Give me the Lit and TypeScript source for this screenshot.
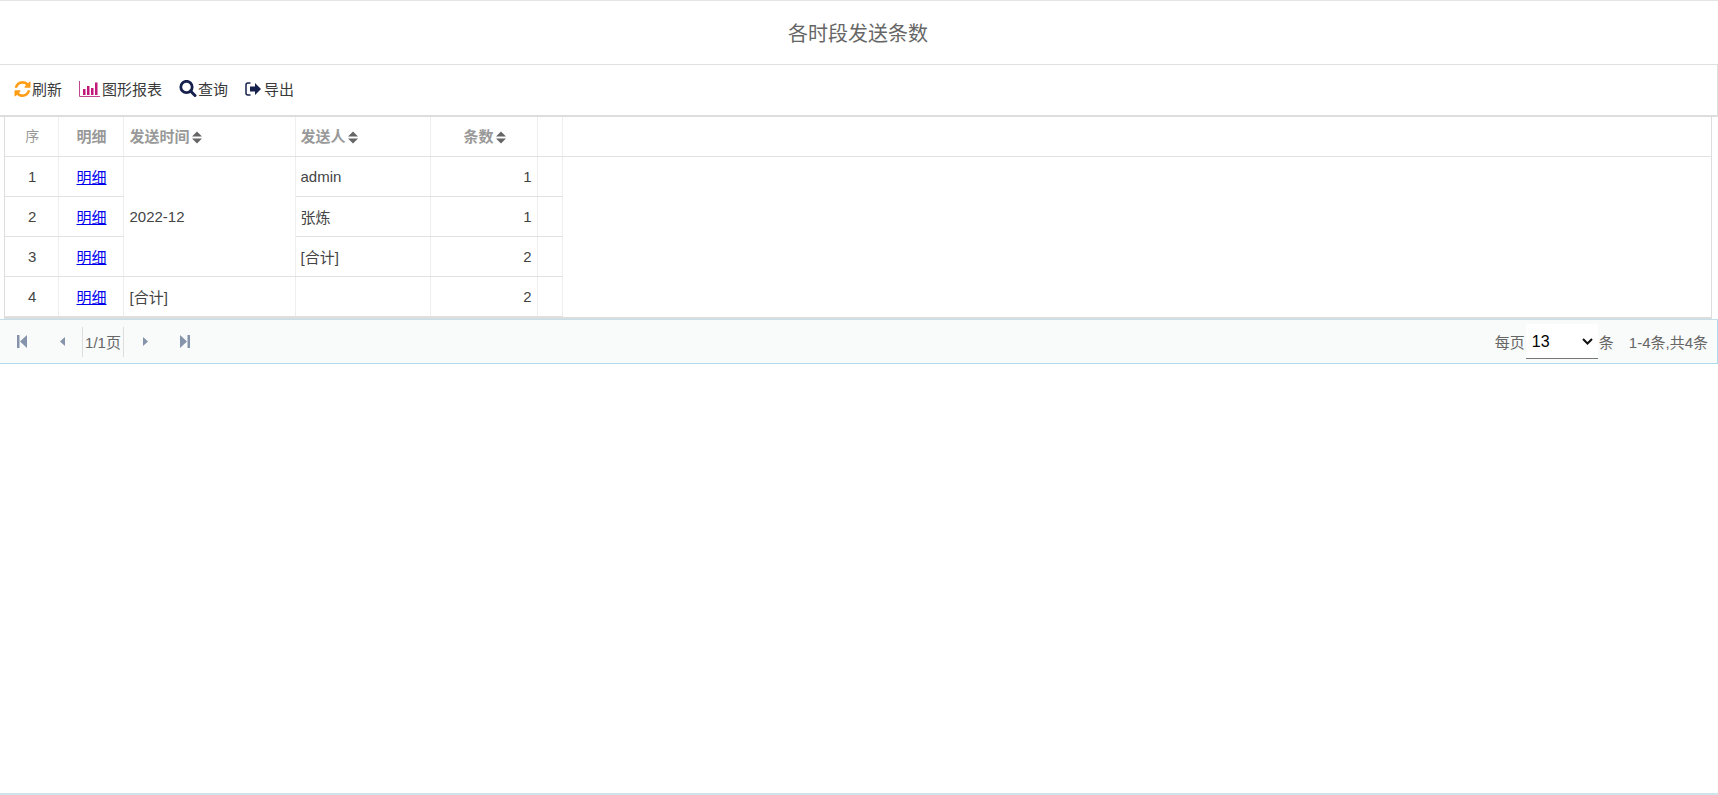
import { LitElement, html, css } from "lit";
import { customElement } from "lit/decorators.js";

const sort = html`<svg class="sort" viewBox="0 0 10 13" width="10" height="13"><path d="M5 0.500L10 5.500H0zM0 7.500h10L5 12.500z" fill="#666"/></svg>`;

@customElement("app-root")
export class AppRoot extends LitElement {
  static styles = css`
    :host { display: flex; flex-direction: column; height: 795px; font-family: "Liberation Sans", "Noto Sans CJK SC", sans-serif; font-size: 15px; color: #444; background: #fff; box-sizing: border-box; border-bottom: 2px solid #cfe3ea; }
    * { box-sizing: border-box; }
    .title { height: 65px; padding-right: 2px; border-top: 1px solid #e5e5e5; border-bottom: 1px solid #e0e0e0; display: flex; align-items: center; justify-content: center; font-size: 20px; color: #666; }
    .toolbar { height: 52px; display: flex; align-items: center; padding: 0 0 3px 14px; gap: 17px; border-right: 1px solid #e0e0e0; border-bottom: 2px solid #ddd; font-size: 15px; color: #3a3a3a; }
    .tool { display: flex; align-items: center; gap: 1px; }
    .tool svg { display: block; }
    .grid { height: 202px; margin-left: 4px; margin-right: 6px; border-left: 1px solid #ddd; border-right: 1px solid #ddd; border-bottom: 2px solid #ddd; position: relative; }
    table { border-collapse: collapse; table-layout: fixed; width: 557px; font-size: 15px; }
    td, th { height: 40px; padding: 0 5px; border-bottom: 1px solid #e2e2e2; border-right: 1px solid #eee; font-weight: normal; white-space: nowrap; overflow: hidden; }
    tr.h th { height: 39px; padding-bottom: 2px; color: #999; font-weight: bold; font-size: 15px; }
    tr.h th.seq { font-weight: normal; font-size: 14px; }
    .c { text-align: center; padding-left: 7px; }
    .l { text-align: left; }
    .time { padding-left: 6px; }
    .r { text-align: right; }
    a { color: #00e; text-decoration: underline; }
    .rule { position: absolute; left: 557px; right: 0; top: 39px; height: 1px; background: #e2e2e2; }
    .sort { vertical-align: -2px; margin-left: 2px; }
    .pager { height: 45px; border-top: 1px solid #c4dfe9; border-right: 1px solid #acdcee; border-bottom: 1px solid #acdcee; background: #f9fafa; display: flex; align-items: center; color: #666; font-size: 15px; padding-left: 2px; }
    .pbtn { width: 40px; display: flex; justify-content: center; }
    .pnum { width: 42px; margin-right: 1px; height: 30px; display: flex; align-items: center; justify-content: center; border-left: 1px solid #ddd; border-right: 1px solid #ddd; white-space: nowrap; }
    .right { margin-left: auto; display: flex; align-items: center; padding-right: 9px; }
    .sel { position: relative; display: flex; margin: 0 1px 0 1px; }
    select { appearance: none; width: 72px; height: 35px; border: 0; border-bottom: 1px solid #777; border-radius: 0; background: #fff; font-family: inherit; font-size: 16px; color: #000; padding: 0 0 0 6px; margin: 0; outline: none; }
    .chev { position: absolute; right: 5px; top: 14px; pointer-events: none; }
    .total { margin-left: 15px; }
  `;

  private rows = [
    { n: 1, who: "admin", c: 1 },
    { n: 2, who: "张炼", c: 1 },
    { n: 3, who: "[合计]", c: 2 },
  ];

  render() {
    return html`
      <div class="title">各时段发送条数</div>
      <div class="toolbar">
        <div class="tool">
          <svg width="17" height="16" viewBox="0 0 1536 1536"><path fill="#ff9e16" d="M1511 928q0 5-1 7-64 268-268 434.500T764 1536q-146 0-282.500-55T238 1324l-129 129q-19 19-45 19t-45-19-19-45V960q0-26 19-45t45-19h448q26 0 45 19t19 45-19 45l-137 137q71 66 161 102t187 36q134 0 250-65t186-179q11-17 53-117 8-23 30-23h192q13 0 22.500 9.500t9.500 22.500zm25-800v448q0 26-19 45t-45 19h-448q-26 0-45-19t-19-45 19-45l138-138Q969 256 768 256q-134 0-250 65T332 500q-11 17-53 117-8 23-30 23H50q-13 0-22.500-9.500T18 608v-7q65-268 270-434.500T768 0q146 0 284 55.500T1297 212l130-129q19-19 45-19t45 19 19 45z"/></svg>
          <span>刷新</span>
        </div>
        <div class="tool">
          <svg width="22" height="16" viewBox="0 0 22 16"><path d="M0.500 0v15.500H21" fill="none" stroke="#c0478f" stroke-width="1"/><path fill="#c2187a" d="M4 8h2.500v6H4zM8 5h2.500v9H8zM12 7h2.500v7H12zM16 1.500h2.500V14H16z"/></svg>
          <span>图形报表</span>
        </div>
        <div class="tool">
          <svg width="18" height="17" viewBox="0 0 18 17"><circle cx="7.500" cy="7" r="5.700" fill="none" stroke="#16204d" stroke-width="2.800"/><path d="M11.500 11l4.500 4.500" stroke="#16204d" stroke-width="3" stroke-linecap="round"/></svg>
          <span>查询</span>
        </div>
        <div class="tool">
          <svg width="18" height="14" viewBox="0 0 18 14"><path d="M5.500 1H3a2 2 0 0 0-2 2v8a2 2 0 0 0 2 2h2.500" fill="none" stroke="#16204d" stroke-width="1.500"/><path fill="#16204d" d="M5 4.500h5V1l6 6-6 6V9.500H5z"/></svg>
          <span>导出</span>
        </div>
      </div>
      <div class="grid">
        <table>
          <colgroup><col style="width:53px"/><col style="width:65px"/><col style="width:172px"/><col style="width:135px"/><col style="width:107px"/><col style="width:25px"/></colgroup>
          <tr class="h">
            <th class="c seq">序</th><th class="c">明细</th>
            <th class="l time">发送时间${sort}</th><th class="l">发送人${sort}</th>
            <th class="c">条数${sort}</th><th></th>
          </tr>
          ${this.rows.map((r, i) => html`<tr>
            <td class="c">${r.n}</td><td class="c"><a href="#">明细</a></td>
            ${i === 0 ? html`<td rowspan="3" class="l time">2022-12</td>` : ""}
            <td class="l">${r.who}</td><td class="r">${r.c}</td><td></td>
          </tr>`)}
          <tr>
            <td class="c">4</td><td class="c"><a href="#">明细</a></td>
            <td class="l time">[合计]</td><td></td><td class="r">2</td><td></td>
          </tr>
        </table>
        <div class="rule"></div>
      </div>
      <div class="pager">
        <div class="pbtn"><svg width="10" height="13" viewBox="0 0 10 13"><path fill="#8593ab" d="M0 0h2.500v13H0zM10 0v13L3 6.500z"/></svg></div>
        <div class="pbtn"><svg width="5" height="9" viewBox="0 0 5 9"><path fill="#8593ab" d="M5 0v9L0 4.500z"/></svg></div>
        <div class="pnum">1/1页</div>
        <div class="pbtn"><svg width="5" height="9" viewBox="0 0 5 9"><path fill="#8593ab" d="M0 0v9l5-4.500z"/></svg></div>
        <div class="pbtn"><svg width="10" height="13" viewBox="0 0 10 13"><path fill="#8593ab" d="M10 0H7.500v13H10zM0 0v13l7-6.500z"/></svg></div>
        <div class="right">
          <span>每页</span>
          <div class="sel">
            <select><option>13</option></select>
            <svg class="chev" width="11" height="7" viewBox="0 0 11 7"><path d="M1 1l4.500 4.500L10 1" fill="none" stroke="#111" stroke-width="2"/></svg>
          </div>
          <span>条</span>
          <span class="total">1-4条,共4条</span>
        </div>
      </div>
    `;
  }
}
